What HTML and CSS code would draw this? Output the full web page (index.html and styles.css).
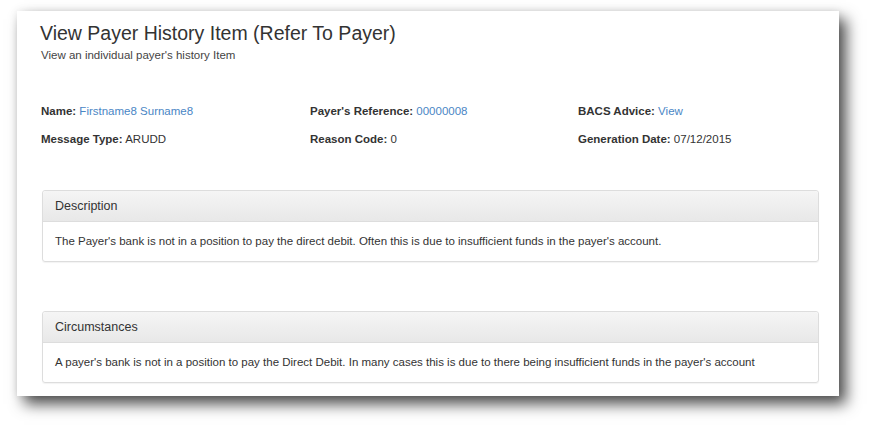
FILE: index.html
```html
<!DOCTYPE html>
<html lang="en">
<head>
    <meta charset="UTF-8">
    <meta name="viewport" content="width=device-width, initial-scale=1.0">
    <title>View Payer History Item</title>
    <link rel="stylesheet" href="styles.css">
</head>
<body>

    <div class="page">
        <h1>View Payer History Item (Refer To Payer)</h1>
        <p class="subtitle">View an individual payer's history Item</p>

        <div class="details">
            <p><b>Name:</b> <a href="#">Firstname8 Surname8</a></p>
            <p><b>Payer's Reference:</b> <a href="#">00000008</a></p>
            <p><b>BACS Advice:</b> <a href="#">View</a></p>
            <p><b>Message Type:</b> ARUDD</p>
            <p><b>Reason Code:</b> 0</p>
            <p><b>Generation Date:</b> 07/12/2015</p>
        </div>

        <div class="panel">
            <div class="panel-heading">Description</div>
            <div class="panel-body">The Payer's bank is not in a position to pay the direct debit. Often this is due to insufficient funds in the payer's account.</div>
        </div>

        <div class="panel">
            <div class="panel-heading">Circumstances</div>
            <div class="panel-body">A payer's bank is not in a position to pay the Direct Debit. In many cases this is due to there being insufficient funds in the payer's account</div>
        </div>
    </div>

</body>
</html>
```

FILE: styles.css
```css
html, body {
    min-height: 443px;
}
body {
    font-family: "Liberation Sans", Arial, sans-serif;
    margin: 0;
    padding: 11px 0 40px 17px;
    box-sizing: border-box;
    background-color: #fff;
    color: #333;
}
.page {
    width: 822px;
    height: 385px;
    box-sizing: border-box;
    padding: 10px 20px 0 24px;
    background-color: #fff;
    box-shadow: 7px 8px 14px rgba(0, 0, 0, 0.7), 0 0 8px rgba(0, 0, 0, 0.08);
}
h1 {
    font-size: 19.5px;
    font-weight: normal;
    margin: 0 0 0 -1px;
    line-height: 24px;
}
.subtitle {
    font-size: 11.5px;
    margin: 4px 0 0;
    color: #444;
}
.details {
    display: grid;
    grid-template-columns: 269px 268px 1fr;
    row-gap: 15px;
    margin-top: 44px;
    font-size: 11.5px;
    line-height: 13px;
}
.details p {
    margin: 0;
}
a {
    color: #4a86c5;
    text-decoration: none;
}
.panel {
    border: 1px solid #ddd;
    border-radius: 3px;
    margin: 44px 0 0 1px;
    box-shadow: 0 1px 1px rgba(0, 0, 0, 0.05);
}
.panel + .panel {
    margin-top: 49px;
}
.panel-heading {
    height: 30px;
    line-height: 30px;
    padding: 0 12px;
    font-size: 12.5px;
    background: linear-gradient(#f5f5f5, #e8e8e8);
    border-bottom: 1px solid #ddd;
    border-radius: 3px 3px 0 0;
}
.panel-body {
    padding: 12px 12px 13px;
    font-size: 11.5px;
    line-height: 14px;
}
```
